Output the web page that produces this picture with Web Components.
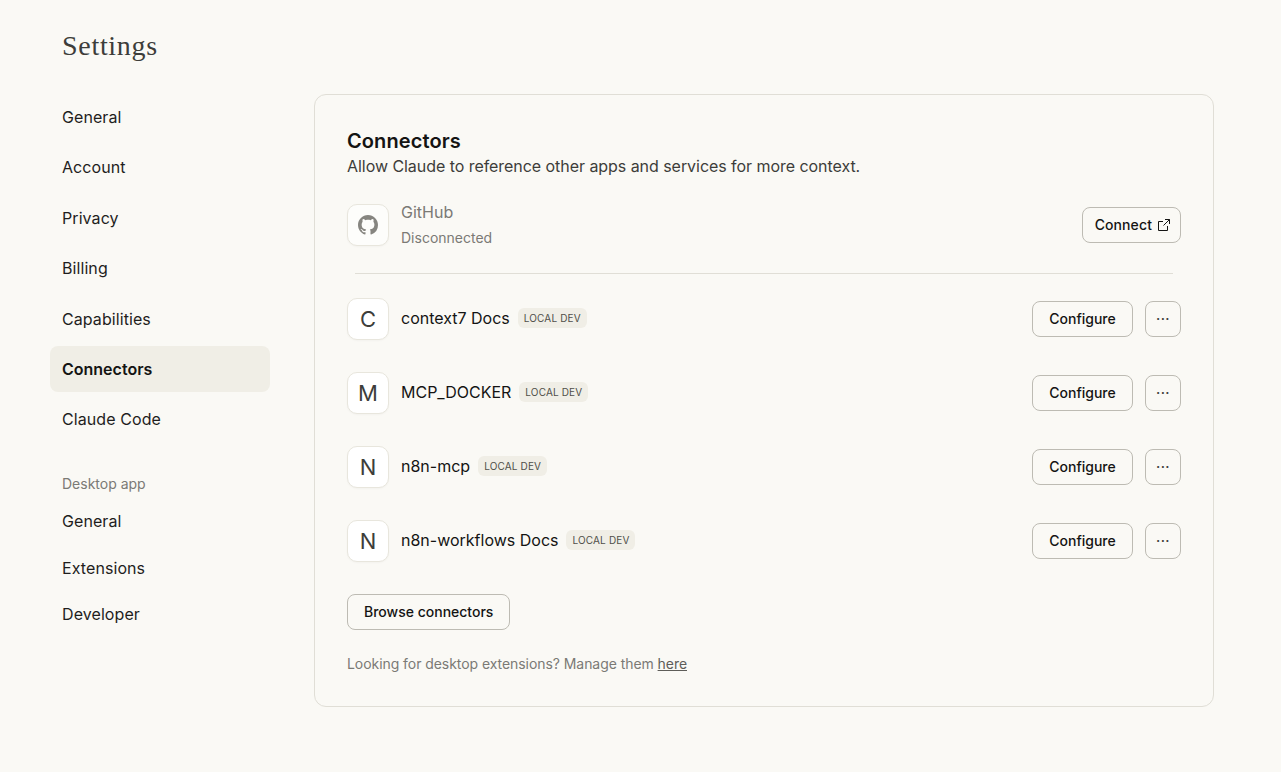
<!doctype html>
<html lang="en">
<head>
<meta charset="utf-8">
<title>Settings</title>
<style>
html,body{margin:0;height:100%;background:#faf9f5}
body{font-family:Inter,"Liberation Sans",sans-serif;color:#141413}
</style>
</head>
<body>
<settings-page>
  <nav-item slot="nav">General</nav-item>
  <nav-item slot="nav">Account</nav-item>
  <nav-item slot="nav">Privacy</nav-item>
  <nav-item slot="nav">Billing</nav-item>
  <nav-item slot="nav">Capabilities</nav-item>
  <nav-item slot="nav" active>Connectors</nav-item>
  <nav-item slot="nav">Claude Code</nav-item>
  <nav-item slot="desktop">General</nav-item>
  <nav-item slot="desktop">Extensions</nav-item>
  <nav-item slot="desktop">Developer</nav-item>
  <connectors-card>
    <connector-row name="GitHub" status="Disconnected" disconnected>
      <svg slot="icon" width="20" height="20" viewBox="0 0 16 16" fill="#868580"><path d="M8 0C3.58 0 0 3.58 0 8c0 3.54 2.29 6.53 5.47 7.59.4.07.55-.17.55-.38 0-.19-.01-.82-.01-1.49-2.01.37-2.53-.49-2.69-.94-.09-.23-.48-.94-.82-1.13-.28-.15-.68-.52-.01-.53.63-.01 1.08.58 1.23.82.72 1.21 1.87.87 2.33.66.07-.52.28-.87.51-1.07-1.78-.2-3.64-.89-3.64-3.95 0-.87.31-1.59.82-2.15-.08-.2-.36-1.02.08-2.12 0 0 .67-.21 2.2.82.64-.18 1.32-.27 2-.27s1.36.09 2 .27c1.53-1.04 2.2-.82 2.2-.82.44 1.1.16 1.92.08 2.12.51.56.82 1.27.82 2.15 0 3.07-1.87 3.75-3.65 3.95.29.25.54.73.54 1.48 0 1.07-.01 1.93-.01 2.2 0 .21.15.46.55.38A8.01 8.01 0 0 0 16 8c0-4.42-3.58-8-8-8z"/></svg>
      <app-button slot="actions">Connect<svg slot="end" width="12" height="12" viewBox="0 0 12 12" fill="none" stroke="#141413" stroke-width="1"><path d="M5 2.5H.5v9h9V7M7 .5h4.5V5M11.5 .5 5.5 6.5"/></svg></app-button>
    </connector-row>
    <hr-line></hr-line>
    <connector-row name="context7 Docs" letter="C"></connector-row>
    <connector-row name="MCP_DOCKER" letter="M"></connector-row>
    <connector-row name="n8n-mcp" letter="N"></connector-row>
    <connector-row name="n8n-workflows Docs" letter="N"></connector-row>
  </connectors-card>
</settings-page>

<script>
class SettingsPage extends HTMLElement{
constructor(){
  super();
  this.attachShadow({mode:'open'}).innerHTML=`<style>
:host{display:block;height:772px;box-sizing:border-box;overflow:hidden}
h1{margin:0;padding:29px 0 0 62px;font:400 28px/34px "Liberation Serif",serif;color:#3d3d3a;letter-spacing:.7px}
.body{display:flex;align-items:flex-start;padding:31px 67px 0 50px;gap:44px}
nav{width:220px;flex:none;display:flex;flex-direction:column}
.main{display:flex;flex-direction:column;gap:4.4px}
.label{font-size:14px;line-height:20px;color:#7b7a75;padding:32px 12px 3.5px}
.main2{display:flex;flex-direction:column}
.content{flex:1}
</style><h1>Settings</h1><div class="body"><nav><div class="main"><slot name="nav"></slot></div><div class="label">Desktop app</div><div class="main2"><slot name="desktop"></slot></div></nav><div class="content"><slot></slot></div></div>`;
}
}
class NavItem extends HTMLElement{
constructor(){
  super();
  this.attachShadow({mode:'open'}).innerHTML=`<style>
:host{display:flex;align-items:center;height:46px;box-sizing:border-box;padding:0 12px;border-radius:8px;font-size:16px;letter-spacing:.08px;color:#1f1e1d}
:host([slot=desktop]){height:46.5px}
:host([active]){background:#f0eee6;font-weight:600;letter-spacing:0;color:#141413}
</style><slot></slot>`;
}
}
class ConnectorsCard extends HTMLElement{
constructor(){
  super();
  this.attachShadow({mode:'open'}).innerHTML=`<style>
:host{display:block;box-sizing:border-box;height:613px;border:1px solid #e0ded6;border-radius:12px;padding:32px}
h2{margin:0;font-size:20px;line-height:28px;font-weight:600;letter-spacing:.1px;color:#141413}
p{margin:-1px 0 0;font-size:16px;line-height:24px;letter-spacing:-.05px;color:#3d3d3a}
.list{margin-top:19px}
.foot{margin-top:16px}
.hint{margin-top:24px;font-size:14px;line-height:20px;letter-spacing:-.06px;color:#7b7a75}
.hint u{color:#5e5d59}
</style><h2>Connectors</h2><p>Allow Claude to reference other apps and services for more context.</p>
<div class="list"><slot></slot></div>
<div class="foot"><app-button>Browse connectors</app-button></div>
<div class="hint">Looking for desktop extensions? Manage them <u>here</u></div>`;
}
}
class ConnectorRow extends HTMLElement{
connectedCallback(){
  if(this.shadowRoot)return;
  const name=this.getAttribute('name'),status=this.getAttribute('status'),letter=this.getAttribute('letter');
  const off=this.hasAttribute('disconnected');
  this.attachShadow({mode:'open'}).innerHTML=`<style>
:host{display:flex;align-items:center;height:74px;gap:12px}
:host([disconnected]){height:56px}
.tile{width:42px;height:42px;box-sizing:border-box;flex:none;display:flex;align-items:center;justify-content:center;background:#fff;border:1px solid #e8e6dd;border-radius:10px;box-shadow:0 1px 2px rgba(0,0,0,.03);font-size:22px;color:#3d3d3a}
:host([disconnected]) .tile{background:#fdfdfb}
.text{flex:1;min-width:0;padding-bottom:2px}
.name{display:flex;align-items:center;gap:8px;font-size:16px;line-height:24px;color:#141413}
:host([disconnected]) .name{color:#7b7a75}
.status{font-size:14px;line-height:20px;color:#7b7a75;margin-top:4px}
.badge{font-size:10px;line-height:20px;padding:0 6px;border-radius:6px;background:#f0eee6;color:#4f4e49;letter-spacing:.15px}
.actions{display:flex;gap:12px;align-items:center;flex:none}
</style><div class="tile"><slot name="icon">${letter||''}</slot></div>
<div class="text"><div class="name">${name}${off?'':'<span class="badge">LOCAL DEV</span>'}</div>${status?`<div class="status">${status}</div>`:''}</div>
<div class="actions"><slot name="actions">${off?'':'<app-button wide>Configure</app-button><app-button square>···</app-button>'}</slot></div>`;
}
}
class AppButton extends HTMLElement{
constructor(){
  super();
  this.attachShadow({mode:'open'}).innerHTML=`<style>
:host{display:inline-flex;align-items:center;justify-content:center;gap:6px;height:36px;box-sizing:border-box;padding:0 16px 1px;border:1px solid #bdbbb3;border-radius:8px;font-size:14px;font-weight:450;color:#141413}
:host([slot=actions]){padding:0 10px 1px 12px;letter-spacing:.1px}
:host([wide]){width:101px;padding:0 0 1px}
:host([square]){width:36px;padding:0 0 1px;font-weight:500;letter-spacing:.4px;color:#3d3d3a}
</style><slot></slot><slot name="end"></slot>`;
}
}
class HrLine extends HTMLElement{
constructor(){
  super();
  this.attachShadow({mode:'open'}).innerHTML=`<style>
:host{display:block;height:1px;margin:20px 8px 8px;background:#e0ded6}
</style>`;
}
}
customElements.define('settings-page',SettingsPage);
customElements.define('nav-item',NavItem);
customElements.define('connectors-card',ConnectorsCard);
customElements.define('connector-row',ConnectorRow);
customElements.define('app-button',AppButton);
customElements.define('hr-line',HrLine);
</script>
</body>
</html>
